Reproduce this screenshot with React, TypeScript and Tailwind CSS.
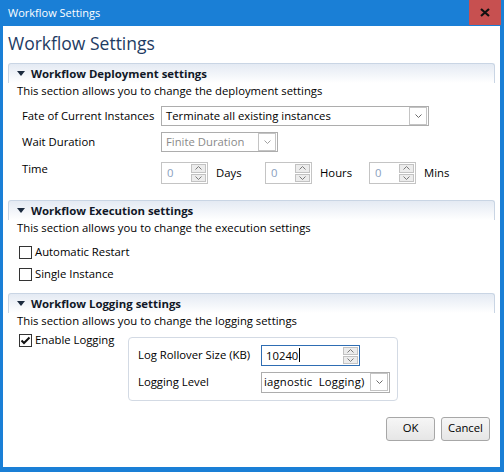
import React from "react";

const font = "font-['Segoe_UI','Open_Sans','Noto_Sans',sans-serif]";

function Caret() {
  return (
    <svg width="8" height="5" viewBox="0 0 8 5" className="shrink-0">
      <polygon points="0,0 8,0 4,5" fill="#1c2b3f" />
    </svg>
  );
}

function Chevron({ up = false, color = "#6b6b6b" }: { up?: boolean; color?: string }) {
  return (
    <svg width="7" height="4" viewBox="0 0 7 4">
      <polyline
        points={up ? "0.5,3.5 3.5,0.5 6.5,3.5" : "0.5,0.5 3.5,3.5 6.5,0.5"}
        fill="none"
        stroke={color}
        strokeWidth="1"
      />
    </svg>
  );
}

function SectionHeader({ title }: { title: string }) {
  return (
    <div className="flex h-[20px] items-center gap-[6px] rounded-t-[3px] border border-b-0 border-[#c9d5e4] bg-gradient-to-b from-[#e4eaf3] to-white pl-[8px]">
      <Caret />
      <span className="text-[11.4px] font-bold text-[#111827]">{title}</span>
    </div>
  );
}

function DropBtn({ disabled = false }: { disabled?: boolean }) {
  return (
    <div className="mr-[1px] flex h-[18px] w-[18px] shrink-0 items-center justify-center border border-[#c4c4c4] bg-white">
      <Chevron color={disabled ? "#a0a0a0" : "#6b6b6b"} />
    </div>
  );
}

function Select({ value, width, disabled = false }: { value: string; width: string; disabled?: boolean }) {
  return (
    <div className={`flex h-[20px] items-center justify-between border border-[#adadad] bg-white ${width}`}>
      <span className={`truncate pl-[4px] ${disabled ? "text-[#8a8a8a]" : "text-black"}`}>{value}</span>
      <DropBtn disabled={disabled} />
    </div>
  );
}

function SpinButtons() {
  return (
    <div className="flex w-[16px] flex-col gap-[1px] self-stretch py-[1px] pr-[1px]">
      <div className="flex flex-1 items-center justify-center border border-[#c2c2c2] bg-[#ececec]">
        <Chevron up color="#7a7a7a" />
      </div>
      <div className="flex flex-1 items-center justify-center border border-[#c2c2c2] bg-[#ececec]">
        <Chevron color="#7a7a7a" />
      </div>
    </div>
  );
}

function Spinner({ value }: { value: string }) {
  return (
    <div className="flex h-[22px] w-[47px] shrink-0 items-center border border-[#c4c4c4] bg-white">
      <span className="flex-1 pl-[5px] text-[#8aa0be]">{value}</span>
      <SpinButtons />
    </div>
  );
}

function Checkbox({ checked = false, label }: { checked?: boolean; label: string }) {
  return (
    <div className="flex items-center gap-[3px] pl-[11px]">
      <div className="flex h-[13px] w-[13px] items-center justify-center border border-[#333333] bg-white">
        {checked && (
          <svg width="11" height="9" viewBox="0 0 11 9">
            <polyline points="1.5,4.5 4,7 9.5,1.5" fill="none" stroke="#111" strokeWidth="2" />
          </svg>
        )}
      </div>
      <span className="text-black">{label}</span>
    </div>
  );
}

function Button({ label }: { label: string }) {
  return (
    <button className="flex h-[24px] w-[49px] items-center justify-center rounded-[3px] border border-[#a7a7a7] bg-gradient-to-b from-[#f6f6f6] to-[#e6e6e6] text-black">
      {label}
    </button>
  );
}

export default function App() {
  return (
    <div className={`flex h-[472px] w-[504px] flex-col bg-[#1a7fd6] text-[11.3px] ${font}`}>
      {/* Title bar */}
      <div className="flex h-[26px] shrink-0 items-start justify-between">
        <span className="pl-[8px] pt-[5px] text-[11px] text-white">Workflow Settings</span>
        <div className="mr-[3px] flex h-[25px] w-[32px] items-center justify-center bg-[#c75050]">
          <svg width="10" height="9" viewBox="0 0 10 9">
            <path d="M1 1 L9 8 M9 1 L1 8" stroke="#111" strokeWidth="2.2" />
          </svg>
        </div>
      </div>

      {/* Content */}
      <div className="mb-[5px] ml-[3px] mr-[4px] flex flex-1 flex-col bg-white px-[5px]">
        <h1 className="mt-[4px] h-[26px] text-[17.5px] leading-[26px] text-[#1d3b63]">Workflow Settings</h1>

        {/* Deployment */}
        <div className="mt-[7px]">
          <SectionHeader title="Workflow Deployment settings" />
          <p className="h-[16px] pl-[9px] leading-[16px] text-black">
            This section allows you to change the deployment settings
          </p>
          <div className="mt-[7px] flex flex-col gap-[6px] pl-[14px] text-black">
            <div className="flex items-center">
              <span className="w-[139px] whitespace-nowrap">Fate of Current Instances</span>
              <Select value="Terminate all existing instances" width="w-[268px]" />
            </div>
            <div className="flex items-center">
              <span className="w-[139px]">Wait Duration</span>
              <Select value="Finite Duration" width="w-[117px]" disabled />
            </div>
            <div className="mt-[4px] flex items-start">
              <span className="w-[139px] leading-[14px]">Time</span>
              <div className="flex items-center">
                <Spinner value="0" />
                <span className="ml-[8px] w-[49px]">Days</span>
                <Spinner value="0" />
                <span className="ml-[8px] w-[49px]">Hours</span>
                <Spinner value="0" />
                <span className="ml-[8px]">Mins</span>
              </div>
            </div>
          </div>
        </div>

        {/* Execution */}
        <div className="mt-[16px]">
          <SectionHeader title="Workflow Execution settings" />
          <p className="h-[16px] pl-[9px] leading-[16px] text-black">
            This section allows you to change the execution settings
          </p>
          <div className="mt-[8px] flex flex-col gap-[5px]">
            <Checkbox label="Automatic Restart" />
            <Checkbox label="Single Instance" />
          </div>
        </div>

        {/* Logging */}
        <div className="mt-[10px]">
          <SectionHeader title="Workflow Logging settings" />
          <p className="h-[16px] pl-[9px] leading-[16px] text-black">
            This section allows you to change the logging settings
          </p>
          <div className="mt-[3px] flex items-start">
            <div className="w-[120px]">
              <Checkbox checked label="Enable Logging" />
            </div>
            <div className="mt-[5px] flex w-[270px] flex-col gap-[6px] rounded-[4px] border border-[#d3dae4] py-[7px] pl-[9px] text-black">
              <div className="flex items-center">
                <span className="w-[123px] whitespace-nowrap">Log Rollover Size (KB)</span>
                <div className="flex h-[21px] w-[99px] items-center border border-[#2e6db3] bg-white">
                  <span className="flex-1 pl-[4px]">
                    10240<span className="ml-[1px] inline-block h-[14px] w-[1px] translate-y-[2px] bg-black" />
                  </span>
                  <SpinButtons />
                </div>
              </div>
              <div className="flex items-center">
                <span className="w-[123px]">Logging Level</span>
                <div className="flex h-[21px] w-[129px] items-center justify-between border border-[#adadad] bg-white">
                  <span className="overflow-hidden whitespace-nowrap pl-[2px] tracking-[0.2px]">iagnostic&nbsp; Logging)</span>
                  <DropBtn />
                </div>
              </div>
            </div>
          </div>
        </div>

        {/* Buttons */}
        <div className="mt-[16px] flex justify-end gap-[6px] pr-[5px]">
          <Button label="OK" />
          <Button label="Cancel" />
        </div>
      </div>
    </div>
  );
}
